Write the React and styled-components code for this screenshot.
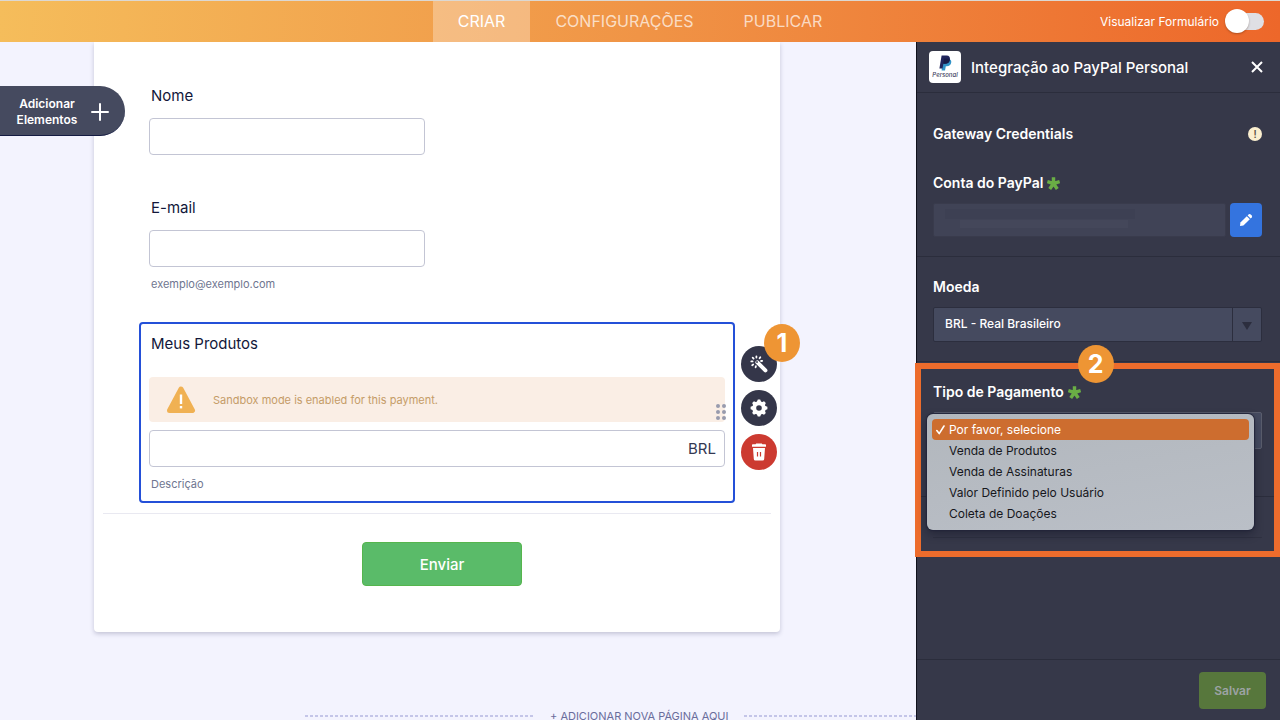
import React, { useState } from 'react'
import styled, { createGlobalStyle } from 'styled-components'

const GlobalStyle = createGlobalStyle`
    *, *::before, *::after {
        box-sizing: border-box;
    }
    body {
        margin: 0;
        font-family: Inter, "Liberation Sans", sans-serif;
        color: #12173a;
        background: #f3f3fe;
    }
    button, input, select {
        font-family: inherit;
    }
    button {
        cursor: pointer;
    }
`

const WandIcon = () => (
    <svg width="18" height="18" viewBox="0 0 18 18" fill="none" stroke="#fff" aria-hidden="true">
        <path d="M7.4 7.4L15.4 15.4" strokeWidth="4" strokeLinecap="round" />
        <circle cx="7" cy="7" r="0.9" fill="#343649" stroke="none" />
        <path
            d="M6.4 1.3V2.6M2.7 2.7L3.6 3.6M1.3 6.4H2.6M2.2 10.2L3.2 9.5M5.6 12.3L5.9 11.2M10.3 2.3L9.6 3.3M12.2 5.8L11.1 6"
            strokeWidth="1.8"
            strokeLinecap="round"
        />
    </svg>
)

const teeth = [0, 45, 90, 135, 180, 225, 270, 315]

const GearIcon = () => (
    <svg width="18" height="18" viewBox="0 0 18 18" fill="#fff" aria-hidden="true">
        {teeth.map((angle) => (
            <path key={angle} d="M6.4 4L7.8 0.6H10.2L11.6 4Z" transform={`rotate(${angle} 9 9)`} />
        ))}
        <circle cx="9" cy="9" r="4.8" fill="none" stroke="#fff" strokeWidth="4" />
    </svg>
)

const TrashIcon = () => (
    <svg width="16" height="18" viewBox="0 0 16 18" fill="#fff" aria-hidden="true">
        <path d="M5.2 0.5H10.8L11.4 1.3H14.2Q15 1.3 15 2.1V3.7H1V2.1Q1 1.3 1.8 1.3H4.6Z" />
        <path
            fillRule="evenodd"
            d="M2 5H14L13.2 16Q13.1 17.5 11.6 17.5H4.4Q2.9 17.5 2.8 16ZM5.9 9V13.6H7.1V9ZM8.9 9V13.6H10.1V9Z"
        />
    </svg>
)

const WarningIcon = () => (
    <svg width="30" height="28" viewBox="0 0 30 28" aria-hidden="true">
        <path d="M15 3L26.5 24.5H3.5Z" fill="#f0b153" stroke="#f0b153" strokeWidth="5" strokeLinejoin="round" />
        <path d="M15 8.5V18" stroke="#fff" strokeWidth="2.4" />
        <path d="M15 20V22.4" stroke="#fff" strokeWidth="2.4" />
    </svg>
)

const PencilIcon = () => (
    <svg width="14" height="14" viewBox="0 0 14 14" fill="#fff" aria-hidden="true">
        <path d="M1 13L1.4 9.6L7.8 3.2L10.8 6.2L4.4 12.6Z" />
        <path d="M8.6 2.4L9.8 1.2Q10.6 0.6 11.4 1.2L12.8 2.6Q13.4 3.4 12.8 4.2L11.6 5.4Z" />
    </svg>
)

const PayPalIcon = () => (
    <svg width="13" height="16" viewBox="0 0 13 16" aria-hidden="true">
        <path d="M3.6 4H9.6Q12.8 4.6 12.2 7.8Q11.5 11.2 7.8 11.2H6.8L6 15.6H2.6Z" fill="#3293c8" />
        <path d="M2.6 0.4H7.6Q11.6 0.6 10.9 4.6Q10.1 8.8 6 8.8H4.4L3.5 13.4H0.4Z" fill="#20255c" />
        <path d="M5 3.6H9.7Q11.2 4 10.7 5.5Q9.8 8.8 6 8.8H4.3Z" fill="#171b48" />
    </svg>
)

const AsteriskIcon = () => (
    <svg width="13" height="13" viewBox="0 0 12 12" stroke="#6aae45" strokeWidth="3.2" aria-hidden="true">
        <path d="M6 6V0.2M6 6L11.7 4.3M6 6L9.5 11M6 6L2.5 11M6 6L0.3 4.3" />
    </svg>
)

const CheckIcon = () => (
    <svg width="9" height="10" viewBox="0 0 9 10" fill="none" stroke="#fff" strokeWidth="1.6" aria-hidden="true">
        <path d="M0.8 5.6L3.2 8.6L8 1" strokeLinecap="round" strokeLinejoin="round" />
    </svg>
)

const paymentTypes = [
    'Por favor, selecione',
    'Venda de Produtos',
    'Venda de Assinaturas',
    'Valor Definido pelo Usuário',
    'Coleta de Doações',
]

const App = () => {
    const [type, setType] = useState(paymentTypes[0])

    return (
        <Page>
            <GlobalStyle />
            <TopBar>
                <Tabs>
                    <Tab href="#criar" $active>CRIAR</Tab>
                    <Tab href="#configuracoes">CONFIGURAÇÕES</Tab>
                    <Tab href="#publicar">PUBLICAR</Tab>
                </Tabs>
                <Preview>
                    Visualizar Formulário
                    <Toggle type="checkbox" role="switch" />
                </Preview>
            </TopBar>

            <Workspace>
                <Canvas>
                    <AddElements type="button">
                        <span>Adicionar Elementos</span>
                        <svg width="18" height="18" viewBox="0 0 18 18" stroke="#fff" strokeWidth="2" aria-hidden="true">
                            <path d="M9 1V17M1 9H17" strokeLinecap="round" />
                        </svg>
                    </AddElements>

                    <FormCard>
                        <Field>
                            <Label htmlFor="nome">Nome</Label>
                            <TextInput id="nome" type="text" />
                        </Field>
                        <Field>
                            <Label htmlFor="email">E-mail</Label>
                            <TextInput id="email" type="email" />
                            <Hint>exemplo@exemplo.com</Hint>
                        </Field>

                        <SelectedField>
                            <Label htmlFor="produtos">Meus Produtos</Label>
                            <Sandbox>
                                <WarningIcon />
                                Sandbox mode is enabled for this payment.
                                <Grip>
                                    <i /><i /><i /><i /><i /><i />
                                </Grip>
                            </Sandbox>
                            <AmountBox>
                                <input id="produtos" type="text" />
                                <span>BRL</span>
                            </AmountBox>
                            <Hint>Descrição</Hint>
                            <Actions>
                                <RoundButton type="button" aria-label="Assistente">
                                    <WandIcon />
                                    <Step $place="corner">1</Step>
                                </RoundButton>
                                <RoundButton type="button" aria-label="Propriedades"><GearIcon /></RoundButton>
                                <RoundButton type="button" aria-label="Excluir" $danger><TrashIcon /></RoundButton>
                            </Actions>
                        </SelectedField>

                        <SubmitRow>
                            <Submit type="button">Enviar</Submit>
                        </SubmitRow>
                    </FormCard>

                    <NewPage>
                        <Dashes />
                        <button type="button">+ ADICIONAR NOVA PÁGINA AQUI</button>
                        <Dashes />
                    </NewPage>
                </Canvas>

                <Panel>
                    <PanelHeader>
                        <Logo>
                            <PayPalIcon />
                            <span>Personal</span>
                        </Logo>
                        <h2>Integração ao PayPal Personal</h2>
                        <Close type="button" aria-label="Fechar">
                            <svg width="12" height="12" viewBox="0 0 12 12" stroke="#fff" strokeWidth="2" aria-hidden="true">
                                <path d="M1 1L11 11M11 1L1 11" />
                            </svg>
                        </Close>
                    </PanelHeader>

                    <Credentials>
                        <Heading>
                            Gateway Credentials
                            <Info>!</Info>
                        </Heading>
                        <PanelLabel htmlFor="conta">
                            Conta do PayPal <AsteriskIcon />
                        </PanelLabel>
                        <Account>
                            <AccountInput id="conta" type="text" readOnly />
                            <EditButton type="button" aria-label="Editar"><PencilIcon /></EditButton>
                        </Account>
                    </Credentials>

                    <Section>
                        <PanelLabel htmlFor="moeda">Moeda</PanelLabel>
                        <SelectBox>
                            <select id="moeda">
                                <option>BRL - Real Brasileiro</option>
                            </select>
                        </SelectBox>
                    </Section>

                    <PaymentSection>
                        <PanelLabel htmlFor="tipo">
                            Tipo de Pagamento <AsteriskIcon />
                        </PanelLabel>
                        <SelectBox $focused>
                            <select id="tipo" value={type} onChange={(e) => setType(e.target.value)}>
                                {paymentTypes.map((name) => <option key={name}>{name}</option>)}
                            </select>
                            <Menu role="listbox" aria-label="Tipo de Pagamento">
                                {paymentTypes.map((name) => (
                                    <Option
                                        key={name}
                                        type="button"
                                        role="option"
                                        aria-selected={name === type}
                                        $selected={name === type}
                                        onClick={() => setType(name)}
                                    >
                                        <Tick>{name === type && <CheckIcon />}</Tick>
                                        {name}
                                    </Option>
                                ))}
                            </Menu>
                        </SelectBox>
                        <Highlight>
                            <Step $place="top">2</Step>
                        </Highlight>
                    </PaymentSection>

                    <MoreSection />

                    <PanelFooter>
                        <Save type="button">Salvar</Save>
                    </PanelFooter>
                </Panel>
            </Workspace>
        </Page>
    )
}

export default App

const Page = styled.div`
    display: flex;
    flex-direction: column;
    height: 100vh;
    overflow: hidden;
`

const TopBar = styled.header`
    display: grid;
    grid-template-columns: 1fr auto 1fr;
    flex: 0 0 42px;
    border-top: 1px solid #dcd8d2;
    background: linear-gradient(92deg, #f5bd5b, #f09446 50%, #ed672a);
`

const Tabs = styled.nav`
    display: flex;
    grid-column: 2;
`

const Tab = styled.a`
    display: flex;
    align-items: center;
    padding: 0 25px 2px;
    font-size: 16px;
    text-decoration: none;
    color: ${({ $active }) => ($active ? '#fff' : 'rgba(255, 255, 255, 0.7)')};
    background: ${({ $active }) => ($active ? 'rgba(255, 255, 255, 0.3)' : 'none')};
`

const Preview = styled.label`
    display: flex;
    align-items: center;
    justify-self: end;
    gap: 7px;
    padding-right: 16px;
    font-size: 12px;
    color: #fff;
`

const Toggle = styled.input`
    appearance: none;
    position: relative;
    width: 38px;
    height: 17px;
    margin: 0;
    border-radius: 9px;
    background: #dfdfe4;

    &::before {
        content: '';
        position: absolute;
        top: -4px;
        left: -1px;
        width: 24px;
        height: 24px;
        border-radius: 50%;
        background: #fff;
        box-shadow: 0 1px 2px rgba(60, 30, 10, 0.35);
    }

    &:checked::before {
        left: 15px;
    }
`

const Workspace = styled.div`
    display: grid;
    grid-template-columns: minmax(0, 1fr) 364px;
    flex: 1;
    min-height: 0;
`

const Canvas = styled.main`
    position: relative;
    display: flex;
    flex-direction: column;
    overflow: hidden;
`

const AddElements = styled.button`
    position: absolute;
    top: 44px;
    left: 0;
    display: flex;
    align-items: center;
    justify-content: space-between;
    width: 125px;
    height: 50px;
    padding: 2px 16px 0 12px;
    border: 0;
    border-bottom: 1px solid #141b42;
    border-radius: 0 25px 25px 0;
    font-size: 12px;
    font-weight: 600;
    line-height: 16px;
    color: #fff;
    background: #454a5f;

    span {
        width: 70px;
    }
`

const FormCard = styled.form`
    margin: 0 136px 0 94px;
    padding: 44px 55px 46px;
    border-radius: 0 0 4px 4px;
    background: #fff;
    box-shadow: 0 2px 4px rgba(60, 60, 100, 0.25);
`

const Field = styled.div`
    height: 112px;
`

const Label = styled.label`
    display: block;
    padding-left: 2px;
    font-size: 15px;
    line-height: 20px;
`

const TextInput = styled.input`
    display: block;
    width: 48%;
    height: 37px;
    margin-top: 12px;
    padding: 0 8px;
    border: 1px solid #c3c5d4;
    border-radius: 4px;
    background: #fff;
`

const Hint = styled.p`
    margin: 9px 0 0 2px;
    font-size: 11px;
    line-height: 16px;
    color: #6f7690;
`

const SelectedField = styled.div`
    position: relative;
    margin: 12px -10px 10px;
    padding: 10px 8px 9px;
    border: 2px solid #2450d8;
    border-radius: 4px;
`

const Sandbox = styled.div`
    position: relative;
    display: flex;
    align-items: center;
    gap: 17px;
    height: 45px;
    margin: 23px 0 8px;
    padding-left: 17px;
    border-radius: 4px;
    font-size: 11px;
    color: #c59c68;
    background: #faeee5;
`

const Grip = styled.span`
    position: absolute;
    right: -1px;
    bottom: 2px;
    display: grid;
    grid-template-columns: 4px 4px;
    gap: 2px;

    i {
        height: 4px;
        border-radius: 50%;
        background: #989bae;
    }
`

const AmountBox = styled.div`
    display: flex;
    align-items: center;
    height: 37px;
    padding: 0 8px;
    border: 1px solid #c3c5d4;
    border-radius: 4px;
    font-size: 15px;
    color: #343852;

    input {
        flex: 1;
        min-width: 0;
        border: 0;
        outline: 0;
        font-size: 15px;
        background: none;
    }
`

const Actions = styled.div`
    position: absolute;
    top: 22px;
    left: calc(100% + 8px);
    display: grid;
    gap: 8px;
`

const RoundButton = styled.button`
    position: relative;
    display: grid;
    place-items: center;
    width: 36px;
    height: 36px;
    padding: 0;
    border: 0;
    border-radius: 50%;
    background: ${({ $danger }) => ($danger ? '#cc3a30' : '#343649')};
`

const Step = styled.span`
    position: absolute;
    top: ${({ $place }) => ($place === 'corner' ? '-22px' : '-24px')};
    left: ${({ $place }) => ($place === 'corner' ? '23px' : 'calc(50% - 20px)')};
    display: grid;
    place-items: center;
    width: 36px;
    height: 38px;
    border-radius: 50%;
    font-size: 25px;
    font-weight: 700;
    color: #fff;
    background: #ee9534;
`

const SubmitRow = styled.div`
    display: flex;
    justify-content: center;
    margin: 0 -46px;
    padding: 28px 0 0 10px;
    border-top: 1px solid #e9e9f1;
`

const Submit = styled.button`
    width: 160px;
    height: 44px;
    border: 1px solid #55b54d;
    border-radius: 4px;
    font-size: 15px;
    font-weight: 500;
    color: #fff;
    background: #5abb69;
`

const NewPage = styled.div`
    display: flex;
    align-items: center;
    gap: 15px;
    margin-top: 76px;
    padding-left: 305px;

    button {
        padding: 0;
        border: 0;
        font-size: 11px;
        line-height: 16px;
        white-space: nowrap;
        color: #6a6d9c;
        background: none;
    }
`

const Dashes = styled.span`
    flex: 4 1 0;
    height: 2px;
    background: repeating-linear-gradient(90deg, #c4c5e8 0 3px, transparent 3px 5px);

    &:last-child {
        flex-grow: 3;
    }
`

const Panel = styled.aside`
    position: relative;
    display: flex;
    flex-direction: column;
    border-left: 1px solid #10111c;
    color: #fff;
    background: #363849;
`

const PanelHeader = styled.div`
    display: flex;
    align-items: center;
    height: 51px;
    padding: 0 16px 0 12px;
    border-bottom: 1px solid #2b2d3c;

    h2 {
        flex: 1;
        margin: 0 0 0 10px;
        font-size: 15px;
        font-weight: 500;
    }
`

const Logo = styled.div`
    display: flex;
    flex-direction: column;
    align-items: center;
    width: 32px;
    height: 32px;
    padding-top: 4px;
    border-radius: 4px;
    background: #fff;

    span {
        font-size: 6px;
        font-style: italic;
        font-weight: 500;
        line-height: 8px;
        color: #40415e;
    }
`

const Close = styled.button`
    display: flex;
    padding: 1px;
    border: 0;
    background: none;
`

const Section = styled.section`
    padding: 20px 18px 19px 16px;
    border-bottom: 1px solid #2b2d3c;
`

const Credentials = styled(Section)`
    padding-top: 31px;
`

const Heading = styled.h3`
    display: flex;
    align-items: center;
    justify-content: space-between;
    margin: 0 0 29px;
    font-size: 14px;
    font-weight: 600;
    line-height: 20px;
`

const Info = styled.span`
    width: 14px;
    height: 14px;
    border-radius: 50%;
    font-size: 10px;
    line-height: 14px;
    text-align: center;
    color: #5d5545;
    background: #fbefcf;
`

const PanelLabel = styled.label`
    display: flex;
    align-items: center;
    gap: 4px;
    margin-bottom: 10px;
    font-size: 14px;
    font-weight: 600;
    line-height: 20px;
`

const Account = styled.div`
    display: flex;
    gap: 4px;
`

const AccountInput = styled.input`
    flex: 1;
    min-width: 0;
    height: 34px;
    border: 1px solid #393b4c;
    border-radius: 2px;
    background:
        linear-gradient(#3d4053, #3d4053) 11px 5px / 190px 10px no-repeat,
        linear-gradient(#44475a, #44475a) 26px 16px / 168px 8px no-repeat,
        #404356;
`

const EditButton = styled.button`
    display: grid;
    place-items: center;
    width: 32px;
    height: 34px;
    padding: 0;
    border: 0;
    border-radius: 4px;
    background: #3474df;
`

const SelectBox = styled.div`
    position: relative;
    height: ${({ $focused }) => ($focused ? '37px' : '35px')};
    border: 1px solid ${({ $focused }) => ($focused ? '#5a5d6d' : '#2c2e3e')};
    border-radius: 2px;
    background: #454a5f;

    select {
        appearance: none;
        display: block;
        width: 100%;
        height: 100%;
        padding: 0 40px 2px 11px;
        border: 0;
        font-size: 12px;
        font-weight: 500;
        color: #fff;
        background: none;
    }

    &::before {
        content: '';
        position: absolute;
        top: 0;
        right: 28px;
        bottom: 0;
        border-left: 1px solid #2c2e3e;
    }

    &::after {
        content: '';
        position: absolute;
        top: calc(50% - 3px);
        right: 9px;
        border: 5px solid transparent;
        border-top: 8px solid #2c2e3e;
        border-bottom: 0;
    }
`

const PaymentSection = styled(Section)`
    position: relative;
    padding-bottom: 47px;
`

const Menu = styled.div`
    position: absolute;
    top: 1px;
    left: -7px;
    right: 7px;
    z-index: 2;
    padding: 5px 5px 6px;
    border-radius: 6px;
    background: linear-gradient(170deg, #b2b7bd, #babfc7);
    box-shadow: 0 0 1px 1px #23253a, 0 4px 10px rgba(10, 12, 30, 0.4);
`

const Option = styled.button`
    display: flex;
    align-items: center;
    width: 100%;
    height: 21px;
    padding: 0;
    border: 0;
    border-radius: 4px;
    font-size: 12px;
    color: ${({ $selected }) => ($selected ? '#fff' : '#16171c')};
    background: ${({ $selected }) => ($selected ? '#cd6d2f' : 'none')};
`

const Tick = styled.span`
    display: flex;
    width: 17px;
    padding-left: 4px;
`

const Highlight = styled.div`
    position: absolute;
    top: 1px;
    left: -2px;
    right: 0;
    z-index: 1;
    height: 194px;
    border: 6px solid #ed6c2c;
    pointer-events: none;
`

const MoreSection = styled.section`
    flex: 1;
    margin: 0 18px 0 16px;

    &::before {
        content: '';
        display: block;
        height: 41px;
        border-bottom: 1px solid #2f3141;
    }
`

const PanelFooter = styled.footer`
    display: flex;
    justify-content: flex-end;
    padding: 12px 14px 11px;
    border-top: 1px solid #2b2d3c;
`

const Save = styled.button`
    width: 67px;
    height: 37px;
    padding: 0;
    border: 0;
    border-radius: 4px;
    font-size: 12px;
    font-weight: 600;
    color: #9da3a4;
    background: #57773c;
`
